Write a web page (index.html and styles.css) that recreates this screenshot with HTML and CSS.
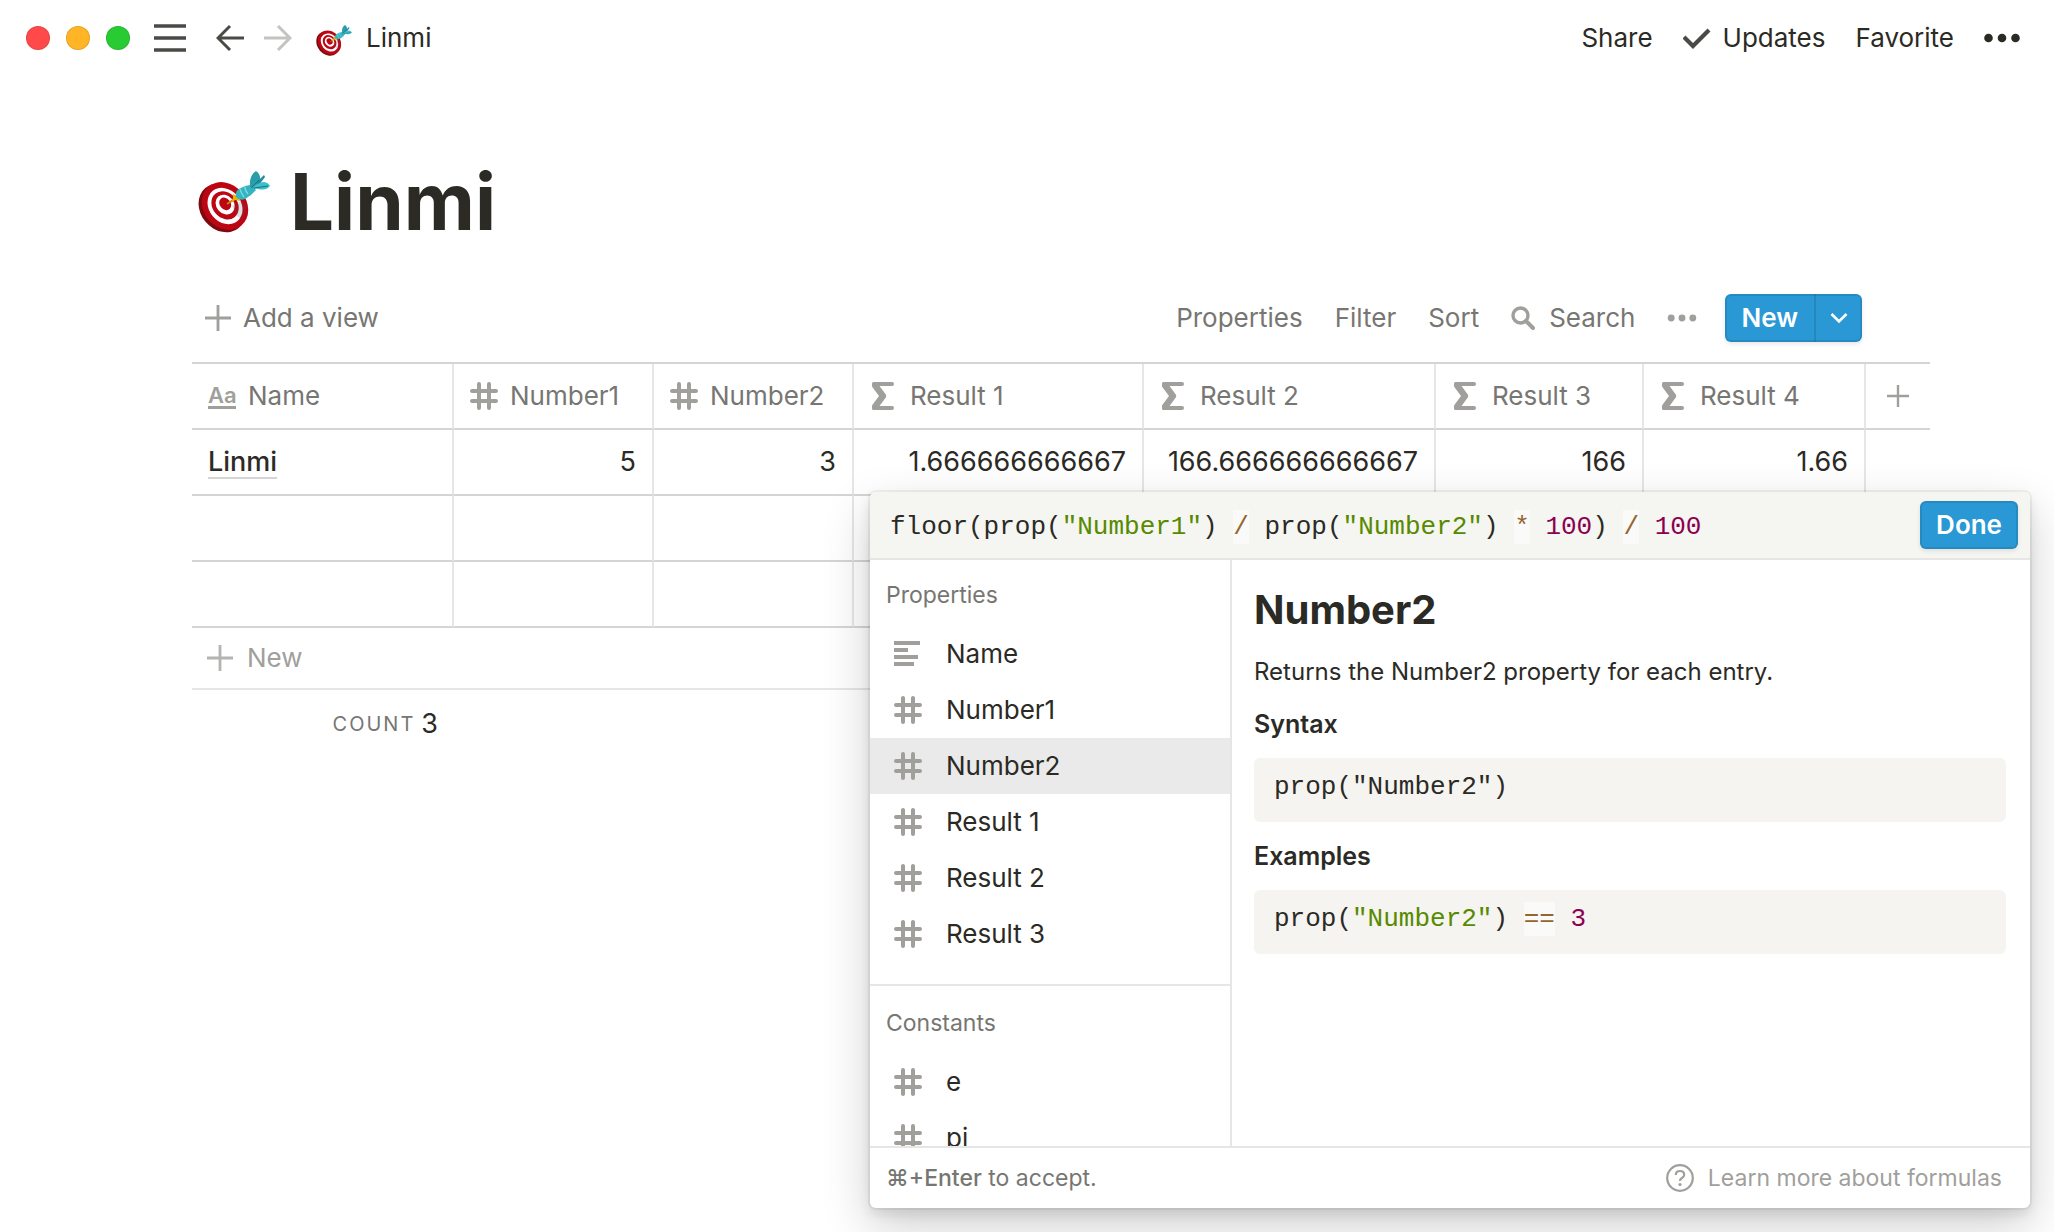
FILE: index.html
```html
<!DOCTYPE html>
<html lang="en">
<head>
<meta charset="utf-8">
<title>Linmi</title>
<meta name="viewport" content="width=device-width, initial-scale=1">
<link rel="stylesheet" href="styles.css">
</head>
<body>
<svg class="sprite" aria-hidden="true">
  <symbol id="hash" viewBox="0 0 28 28"><path d="M9 2v24M19 2v24M2 9h24M2 19h24" fill="none" stroke="currentColor" stroke-width="4" stroke-linecap="round"/></symbol>
  <symbol id="sigma" viewBox="0 0 28 28"><path d="M3.500 0H22q2 0 2 2t-2 2H9.500l6.300 8.500q1 1.500 0 3L9.500 24H22q2 0 2 2t-2 2H3.500Q2 28 2 26.500v-2.300q0-.7.5-1.500L9 14 2.500 5.300Q2 4.600 2 3.800V1.500Q2 0 3.500 0z" fill="currentColor"/></symbol>
  <symbol id="plus" viewBox="0 0 26 26"><path d="M13 0v26M0 13h26" fill="none" stroke="currentColor" stroke-width="2.800"/></symbol>
  <symbol id="lines" viewBox="0 0 28 28"><path d="M0 1h26v4H0zM0 8h14v4H0zM0 15h24v4H0zM0 22h20v4H0z" fill="currentColor"/></symbol>
  <symbol id="dots" viewBox="0 0 36 10"><circle cx="4.500" cy="5" r="4.300" fill="currentColor"/><circle cx="18" cy="5" r="4.300" fill="currentColor"/><circle cx="31.500" cy="5" r="4.300" fill="currentColor"/></symbol>
  <symbol id="arrow" viewBox="0 0 28 28"><path d="M14 2L2 14l12 12M2 14h26" fill="none" stroke="currentColor" stroke-width="3"/></symbol>
  <symbol id="dart" viewBox="0 0 72 62">
    <ellipse cx="24" cy="37" rx="21.500" ry="26" transform="rotate(-40 24 37)" fill="#7d0a10"/>
    <g transform="rotate(-40 27 35)">
      <ellipse cx="27" cy="35" rx="21.500" ry="25.500" fill="#bd0613"/>
      <ellipse cx="27" cy="35" rx="16" ry="19.500" fill="#fff"/>
      <ellipse cx="27.500" cy="34.500" rx="12.500" ry="15.200" fill="#bd0613"/>
      <ellipse cx="28" cy="34" rx="8.800" ry="10.600" fill="#fff"/>
      <ellipse cx="28.500" cy="33.500" rx="5.400" ry="6.800" fill="#bd0613"/>
    </g>
    <path d="M34 35l11-6 4 8-5 12-5-4z" fill="#556" opacity=".18"/>
    <path d="M29 33L38 27" stroke="#c08b00" stroke-width="1.800"/>
    <path d="M35 23l4 2 4 5-6-1-4 3 2-5z" fill="#e3b505"/>
    <path d="M38 26q-1-6 3-8 7-4 12-4l5 5q-5 6-11 9-6 2-9-2z" fill="#35b4c0"/>
    <path d="M42 18q1 4 4 8M47 16q0 4 3 7" fill="none" stroke="#74dbe2" stroke-width="1.400"/>
    <path d="M52 16q-1-12 6-16 5 3 4 10l-5 8z" fill="#2a9dab"/>
    <path d="M58 12l8-8 1 2-6 8z" fill="#2388a0"/>
    <path d="M55 17q4-5 10-6 5 0 7 4-4 5-12 3z" fill="#3bc0cb"/>
    <path d="M53 17l8-8M56 17l14-2" stroke="#1b7480" stroke-width="1"/>
  </symbol>
</svg>

<header class="topbar">
  <div class="lights"><i class="light light-red"></i><i class="light light-amber"></i><i class="light light-green"></i></div>
  <button class="icon-button" aria-label="Menu"><svg class="menu-icon" viewBox="0 0 32 28"><path d="M0 2h32M0 14h32M0 26h32" stroke="currentColor" stroke-width="3.500"/></svg></button>
  <nav class="history">
    <button class="icon-button" aria-label="Back"><svg class="i28"><use href="#arrow"/></svg></button>
    <button class="icon-button forward" aria-label="Forward"><svg class="i28"><use href="#arrow"/></svg></button>
  </nav>
  <a class="crumb" href="#"><svg class="crumb-icon"><use href="#dart"/></svg>Linmi</a>
  <div class="actions">
    <button class="text-button">Share</button>
    <button class="text-button updates"><svg class="i28" viewBox="0 0 28 28"><path d="M1 13l9 9L26 6" fill="none" stroke="#4b4a46" stroke-width="4.200"/></svg>Updates</button>
    <button class="text-button">Favorite</button>
    <button class="icon-button more" aria-label="More"><svg class="dots"><use href="#dots"/></svg></button>
  </div>
</header>

<main class="page">
  <h1 class="title"><svg class="title-icon"><use href="#dart"/></svg>Linmi</h1>

  <div class="toolbar">
    <button class="text-button add-view"><svg class="plus"><use href="#plus"/></svg>Add a view</button>
    <div class="tools">
      <button class="text-button">Properties</button>
      <button class="text-button">Filter</button>
      <button class="text-button">Sort</button>
      <button class="text-button search"><svg class="search-icon" viewBox="0 0 24 24"><circle cx="9.500" cy="9.500" r="7.500" fill="none" stroke="currentColor" stroke-width="3.400"/><path d="M15 15l7 7" stroke="currentColor" stroke-width="4" stroke-linecap="round"/></svg>Search</button>
      <button class="icon-button view-more" aria-label="View options"><svg class="dots-small"><use href="#dots"/></svg></button>
      <div class="new-group">
        <button class="new-main">New</button>
        <button class="new-menu" aria-label="New options"><svg class="chevron" viewBox="0 0 18 12"><path d="M1.500 2L9 9.500 16.500 2" fill="none" stroke="currentColor" stroke-width="2.600"/></svg></button>
      </div>
    </div>
  </div>

  <table class="grid">
    <colgroup><col class="c-name"><col class="c-number"><col class="c-number"><col class="c-result-1"><col class="c-result-2"><col class="c-result-3"><col class="c-result-4"><col></colgroup>
    <thead>
      <tr>
        <th><span class="head"><span class="aa" aria-hidden="true">Aa</span>Name</span></th>
        <th><span class="head"><svg class="i28"><use href="#hash"/></svg>Number1</span></th>
        <th><span class="head"><svg class="i28"><use href="#hash"/></svg>Number2</span></th>
        <th><span class="head"><svg class="i28"><use href="#sigma"/></svg>Result 1</span></th>
        <th><span class="head"><svg class="i28"><use href="#sigma"/></svg>Result 2</span></th>
        <th><span class="head"><svg class="i28"><use href="#sigma"/></svg>Result 3</span></th>
        <th><span class="head"><svg class="i28"><use href="#sigma"/></svg>Result 4</span></th>
        <th class="add-col"><button class="icon-button" aria-label="Add a property"><svg class="plus-small"><use href="#plus"/></svg></button></th>
      </tr>
    </thead>
    <tbody>
      <tr><td><a class="row-link" href="#">Linmi</a></td><td>5</td><td>3</td><td>1.666666666667</td><td>166.666666666667</td><td>166</td><td>1.66</td><td></td></tr>
      <tr><td></td><td></td><td></td><td></td><td></td><td></td><td></td><td></td></tr>
      <tr><td></td><td></td><td></td><td></td><td></td><td></td><td></td><td></td></tr>
    </tbody>
  </table>
  <button class="new-row"><svg class="plus"><use href="#plus"/></svg>New</button>
  <div class="summary"><span class="summary-label">COUNT</span><span class="summary-value">3</span></div>
</main>

<section class="editor" role="dialog" aria-label="Formula">
  <div class="formula-bar">
    <div class="formula" role="textbox" contenteditable="true" spellcheck="false" aria-label="Formula">floor(prop(<span class="str">"Number1"</span>) <span class="op">/</span> prop(<span class="str">"Number2"</span>) <span class="op">*</span> <span class="num">100</span>) <span class="op">/</span> <span class="num">100</span></div>
    <button class="done">Done</button>
  </div>
  <div class="editor-body">
    <div class="sidebar">
      <section class="group">
        <h3 class="group-title">Properties</h3>
        <button class="item"><svg class="i28"><use href="#lines"/></svg>Name</button>
        <button class="item"><svg class="i28"><use href="#hash"/></svg>Number1</button>
        <button class="item selected"><svg class="i28"><use href="#hash"/></svg>Number2</button>
        <button class="item"><svg class="i28"><use href="#hash"/></svg>Result 1</button>
        <button class="item"><svg class="i28"><use href="#hash"/></svg>Result 2</button>
        <button class="item"><svg class="i28"><use href="#hash"/></svg>Result 3</button>
      </section>
      <section class="group">
        <h3 class="group-title">Constants</h3>
        <button class="item"><svg class="i28"><use href="#hash"/></svg>e</button>
        <button class="item"><svg class="i28"><use href="#hash"/></svg>pi</button>
      </section>
    </div>
    <article class="docs">
      <h2 class="docs-title">Number2</h2>
      <p class="docs-text">Returns the Number2 property for each entry.</p>
      <h3 class="docs-label">Syntax</h3>
      <pre class="code">prop("Number2")</pre>
      <h3 class="docs-label">Examples</h3>
      <pre class="code">prop(<span class="str">"Number2"</span>) <span class="op">==</span> <span class="num">3</span></pre>
    </article>
  </div>
  <footer class="editor-foot">
    <span><b class="key">⌘+Enter</b> to accept.</span>
    <a class="learn" href="#"><svg class="i28" viewBox="0 0 28 28"><circle cx="14" cy="14" r="12.800" fill="none" stroke="currentColor" stroke-width="2.200"/><path d="M9.800 11q0-4 4.200-4t4.200 3.700q0 2-2.200 3.300t-2 3" fill="none" stroke="currentColor" stroke-width="2.200"/><circle cx="14" cy="20.500" r="1.600" fill="currentColor"/></svg>Learn more about formulas</a>
  </footer>
</section>
</body>
</html>
```

FILE: styles.css
```css
* { box-sizing: border-box; }

body {
  margin: 0;
  position: relative;
  min-height: 100vh;
  background: #fff;
  color: #2b2a25;
  font-family: Inter, "Liberation Sans", sans-serif;
  font-size: 26px;
  line-height: 36px;
}

.sprite { position: absolute; width: 0; height: 0; }
svg { flex: none; display: block; }
button { margin: 0; padding: 0; border: 0; background: none; color: inherit; font: inherit; text-align: left; cursor: pointer; }
a { color: inherit; text-decoration: none; }
.i28 { width: 28px; height: 28px; }
.plus { width: 26px; height: 26px; }
.plus-small { width: 22px; height: 22px; }
.dots { width: 36px; height: 10px; }
.dots-small { width: 30px; height: 8px; }
.text-button { display: flex; align-items: center; white-space: nowrap; }
.icon-button { display: block; }

/* Window bar */
.topbar { display: flex; align-items: center; height: 76px; padding: 0 34px 0 26px; }
.lights { display: flex; gap: 16px; margin-right: 24px; }
.light { width: 24px; height: 24px; border-radius: 50%; border: 1px solid rgba(0, 0, 0, .1); }
.light-red { background: #ff4a49; }
.light-amber { background: #ffb525; }
.light-green { background: #29cb33; }
.topbar .icon-button { color: #4b4a46; }
.menu-icon { width: 32px; height: 28px; }
.history { display: flex; gap: 20px; margin: 0 24px 0 30px; }
.topbar .forward { color: #c4c3c1; transform: scaleX(-1); }
.crumb { display: flex; align-items: center; gap: 14px; }
.crumb-icon { width: 36px; height: 31px; margin-top: 4px; }
.actions { display: flex; align-items: center; gap: 30px; margin-left: auto; }
.updates { gap: 12px; }
.topbar .more { color: #2b2a25; }

/* Page */
.page { padding: 84px 124px 0 192px; }
.title { display: flex; align-items: center; gap: 20px; margin: 0; padding-left: 6px; font-size: 78px; line-height: 84px; font-weight: 700; }
.title-icon { width: 72px; height: 62px; }

.toolbar { display: flex; align-items: center; justify-content: space-between; height: 48px; margin: 50px 68px 20px 0; padding-left: 13px; color: #777672; }
.toolbar svg { color: #a09f9c; }
.add-view { gap: 12px; }
.tools { display: flex; align-items: center; gap: 32px; }
.search { gap: 14px; }
.new-group { display: flex; height: 48px; margin-left: -4px; border-radius: 6px; background: #2998d5; color: #fff; box-shadow: inset 0 0 0 2px rgba(15, 15, 15, .1), 0 2px 4px rgba(15, 15, 15, .1); }
.toolbar .new-group svg { color: #fff; }
.new-main { padding: 0 16px; font-weight: 600; }
.new-menu { display: flex; align-items: center; justify-content: center; width: 48px; border-left: 2px solid rgba(15, 15, 15, .12); }
.search-icon { width: 24px; height: 24px; }
.chevron { width: 18px; height: 12px; }

/* Table */
.grid { width: 100%; table-layout: fixed; border-collapse: separate; border-spacing: 0; border-top: 2px solid #d5d5d4; }
.c-name { width: 262px; }
.c-number { width: 200px; }
.c-result-1 { width: 290px; }
.c-result-2 { width: 292px; }
.c-result-3 { width: 208px; }
.c-result-4 { width: 222px; }
.grid th, .grid td { height: 66px; padding: 0 16px; border-right: 2px solid #e6e6e5; border-bottom: 2px solid #d5d5d4; white-space: nowrap; }
.grid th { padding-right: 8px; color: #777672; font-weight: 400; }
.grid td { font-size: 27px; text-align: right; }
.grid td:first-child { text-align: left; }
.grid th:last-child, .grid td:last-child { border-right: 0; }
.grid .add-col { padding: 0 0 0 21px; text-align: left; }
.head { display: flex; align-items: center; gap: 12px; }
.head svg, .aa { color: #a09f9c; }
.grid .add-col svg { color: #a09f9c; }
.aa { width: 28px; border-bottom: 3px solid; font-size: 22px; line-height: 22px; font-weight: 600; }
.row-link { border-bottom: 2px solid #d5d5d4; font-weight: 500; line-height: 30px; display: inline-block; }
.new-row { display: flex; align-items: center; gap: 14px; width: 100%; height: 62px; padding: 0 0 0 15px; border-bottom: 2px solid #e6e6e5; color: #a09f9c; }
.new-row svg { color: #b5b4b2; }
.summary { display: flex; align-items: center; justify-content: flex-end; gap: 6px; width: 262px; height: 68px; padding-right: 16px; }
.summary-label { color: #777672; font-size: 20px; letter-spacing: 2px; }
.summary-value { font-size: 27px; }

/* Formula editor popover */
.editor { position: absolute; top: 492px; right: 24px; width: 1160px; border-radius: 6px; background: #fff; box-shadow: 0 0 0 2px rgba(15, 15, 15, .05), 0 6px 12px rgba(15, 15, 15, .1), 0 18px 48px rgba(15, 15, 15, .2); }
.formula-bar { display: flex; align-items: center; gap: 16px; height: 68px; padding: 0 12px 0 20px; border-bottom: 2px solid #e6e6e4; border-radius: 6px 6px 0 0; background: #f5f5f1; }
.formula, .code { font-family: "Liberation Mono", monospace; font-size: 26px; line-height: 34px; white-space: pre; }
.formula { flex: 1; padding-top: 4px; outline: 0; }
.str { color: #578a00; }
.op { background: rgba(255, 255, 255, .5); color: #95652f; padding: 2px 0; }
.num { color: #8b0050; }
.done { height: 48px; padding: 0 16px; border-radius: 6px; background: #2998d5; color: #fff; font-weight: 600; box-shadow: inset 0 0 0 2px rgba(15, 15, 15, .1), 0 2px 4px rgba(15, 15, 15, .1); }
.editor-body { display: flex; height: 586px; }
.sidebar { width: 362px; flex: none; overflow: hidden; border-right: 2px solid #e6e6e5; }
.group { padding: 20px 0 22px; }
.group + .group { padding-top: 22px; border-top: 2px solid #e6e6e5; }
.group-title { margin: 0 0 16px; padding-left: 16px; color: #777672; font-size: 23px; line-height: 30px; font-weight: 400; }
.item { display: flex; align-items: center; gap: 24px; width: 100%; height: 56px; padding-left: 24px; }
.item svg { color: #a09f9c; }
.selected { background: #eaeaea; }
.docs { flex: 1; padding: 26px 24px 24px 22px; }
.docs-title { margin: 0 0 20px; font-size: 40px; line-height: 48px; font-weight: 700; }
.docs-text { margin: 0 0 16px; font-size: 24px; line-height: 36px; }
.docs-label { margin: 0 0 16px; font-size: 25px; line-height: 36px; font-weight: 600; }
.code { height: 64px; margin: 0 0 16px; padding: 12px 20px; border-radius: 6px; background: #f5f4f0; }
.editor-foot { display: flex; align-items: center; justify-content: space-between; height: 62px; padding: 0 28px 0 16px; border-top: 2px solid #e6e6e5; color: #777672; font-size: 23px; }
.key { font-weight: 500; }
.learn { display: flex; align-items: center; gap: 14px; color: #a09f9c; }
```
